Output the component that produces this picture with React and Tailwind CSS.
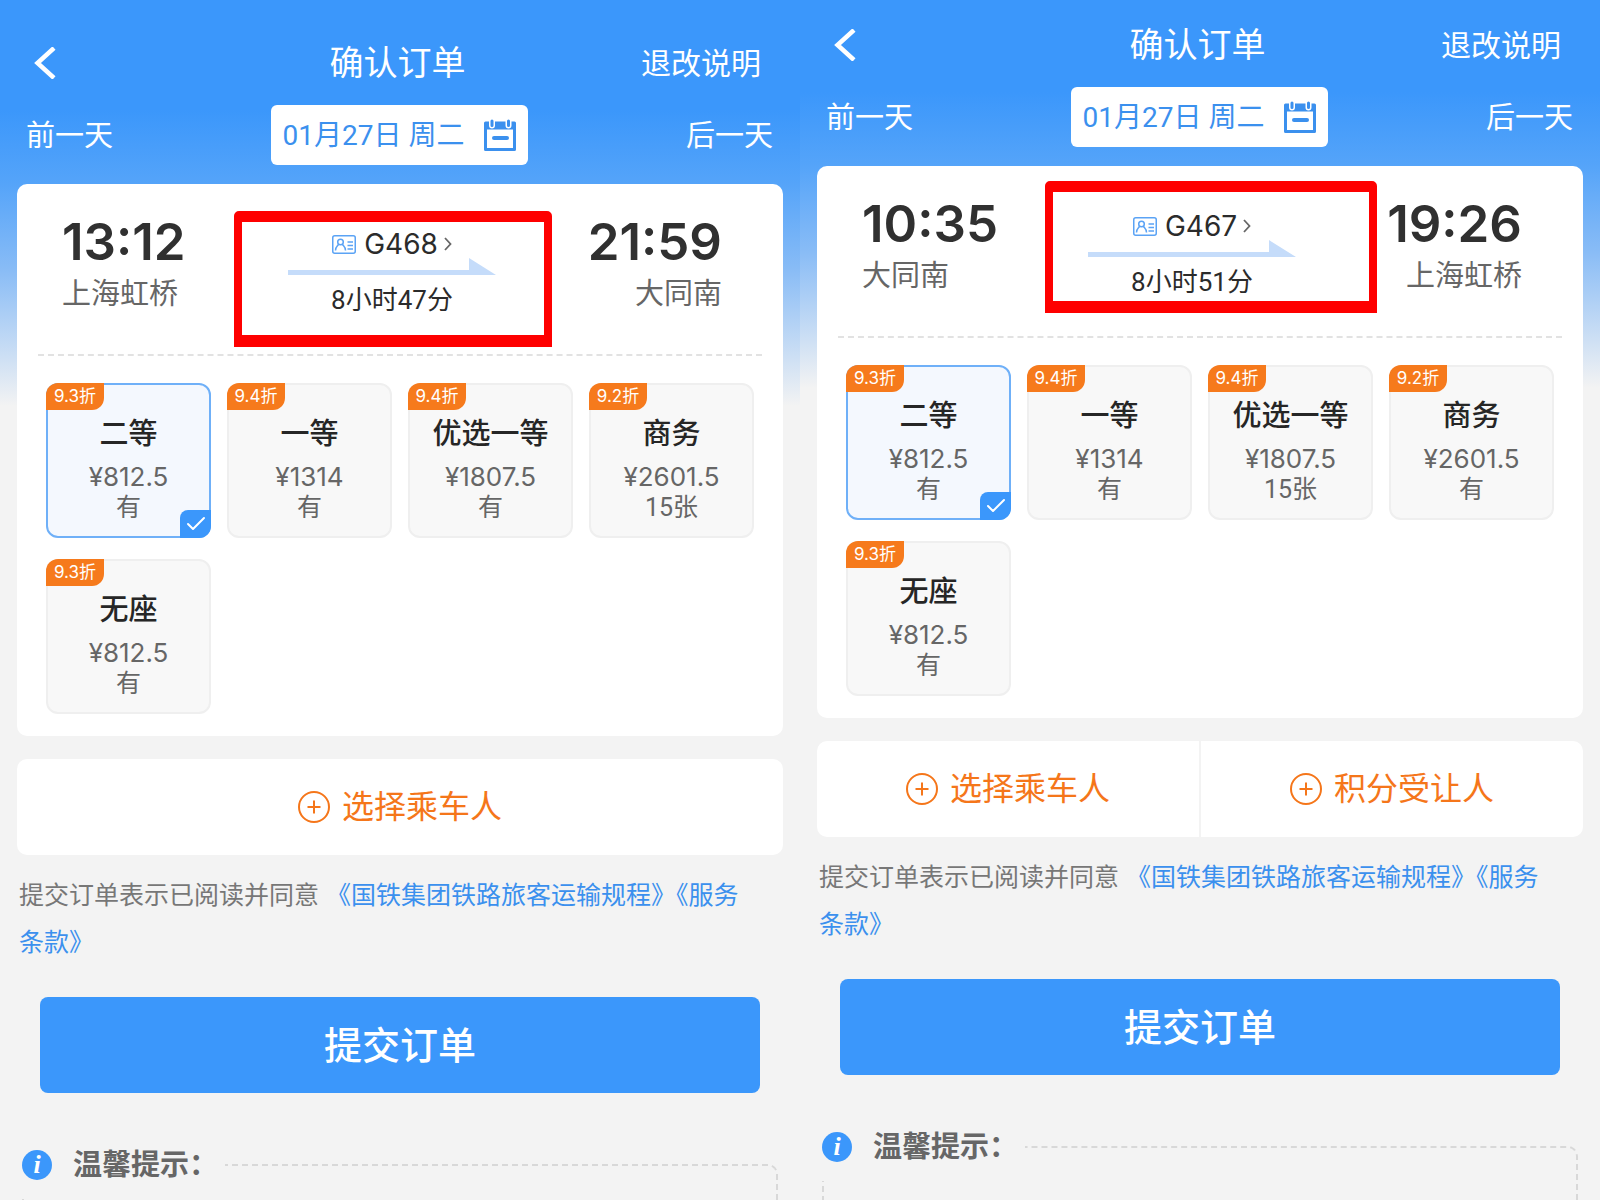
import React from "react";
import { Check } from "lucide-react";

const orders = [
  {
    id: "g468",
    train: "G468",
    duration: "8小时47分",
    from: { time: "13:12", station: "上海虹桥" },
    to: { time: "21:59", station: "大同南" },
    seats: [
      { name: "二等", price: "¥812.5", left: "有", discount: "9.3折" },
      { name: "一等", price: "¥1314", left: "有", discount: "9.4折" },
      { name: "优选一等", price: "¥1807.5", left: "有", discount: "9.4折" },
      { name: "商务", price: "¥2601.5", left: "15张", discount: "9.2折" },
      { name: "无座", price: "¥812.5", left: "有", discount: "9.3折" },
    ],
    actions: ["选择乘车人"],
    panel: "pt-[39px] bg-[linear-gradient(to_bottom,#3b97fb_110px,#55a4f9_184px,#89bcf6_270px,#f3f3f3_406px)]",
    mark: "-left-[54px] -top-[19px] w-[318px] h-[136px]",
  },
  {
    id: "g467",
    train: "G467",
    duration: "8小时51分",
    from: { time: "10:35", station: "大同南" },
    to: { time: "19:26", station: "上海虹桥" },
    seats: [
      { name: "二等", price: "¥812.5", left: "有", discount: "9.3折" },
      { name: "一等", price: "¥1314", left: "有", discount: "9.4折" },
      { name: "优选一等", price: "¥1807.5", left: "15张", discount: "9.4折" },
      { name: "商务", price: "¥2601.5", left: "有", discount: "9.2折" },
      { name: "无座", price: "¥812.5", left: "有", discount: "9.3折" },
    ],
    actions: ["选择乘车人", "积分受让人"],
    panel: "pt-[21px] bg-[linear-gradient(to_bottom,#3b97fb_92px,#55a4f9_166px,#89bcf6_252px,#f3f3f3_388px)]",
    mark: "-left-[43px] -top-[31px] w-[332px] h-[132px]",
  },
];

export default function App() {
  return (
    <div className="grid min-h-screen grid-cols-2 bg-[#f3f3f3] font-['Inter','Noto_Sans_CJK_SC',sans-serif]">
      {orders.map((order) => (
        <OrderPanel key={order.id} order={order} />
      ))}
    </div>
  );
}

function OrderPanel({ order }) {
  return (
    <main className={`flex min-w-0 flex-col ${order.panel}`}>
      <header className="grid h-12 grid-cols-[1fr_auto_1fr] items-center pl-[34px] pr-[39px] text-white">
        <button aria-label="返回" className="justify-self-start">
          <svg width="22" height="32" viewBox="0 0 22 32" fill="none" stroke="currentColor" strokeWidth="4.500">
            <path d="M20 1 L3.500 16 L20 31" />
          </svg>
        </button>
        <h1 className="text-[34px] leading-[48px]">确认订单</h1>
        <a href="#rules" className="justify-self-end text-[30px] leading-[48px]">退改说明</a>
      </header>

      <nav className="mt-[18px] flex h-[60px] items-center justify-between pl-[26px] pr-[27px] text-[29px] text-white">
        <button className="pt-[2px]">前一天</button>
        <button className="flex h-full items-center gap-[20px] rounded-md bg-white px-[12px] font-['Roboto','Noto_Sans_CJK_SC',sans-serif] text-[28px] text-[#3b90ee]">
          <span className="pt-[2px]">01月27日 周二</span>
          <CalendarIcon />
        </button>
        <button className="pt-[2px]">后一天</button>
      </nav>

      <section className="mx-[17px] mt-[19px] rounded-[10px] bg-white pb-[22px] pt-[29px]">
        <div className="grid grid-cols-[1fr_auto_1fr] pl-[45px] pr-[61px]">
          <Stop stop={order.from} />
          <div className="relative mt-[17px] flex w-[208px] flex-col items-center text-[#2b2b2b]">
            <a href="#train" className="flex h-[28px] items-center gap-[8px] text-[28px]">
              <IdCardIcon />
              {order.train}
              <svg width="8" height="14" viewBox="0 0 8 14" fill="none" stroke="#666" strokeWidth="1.800" className="-ml-[2px]">
                <path d="M1 1 L6.500 7 L1 13" />
              </svg>
            </a>
            <svg width="208" height="17" viewBox="0 0 208 17" fill="#c5dcfa">
              <path d="M0 12 H181 V0 L208 17 H0 Z" />
            </svg>
            <p className="font-['Roboto','Noto_Sans_CJK_SC',sans-serif] text-[26px] leading-[50px]">{order.duration}</p>
            <div className={`pointer-events-none absolute rounded-t-[5px] border-x-8 border-b-12 border-t-11 border-[#fe0000] ${order.mark}`} />
          </div>
          <Stop stop={order.to} right />
        </div>

        <div className="mx-[21px] mt-[29px] border-t-2 border-dashed border-[#e2e2e2]" />

        <div className="mt-[27px] grid grid-cols-4 gap-x-4 gap-y-[21px] px-[29px]">
          {order.seats.map((seat, i) => (
            <SeatOption key={seat.name} seat={seat} group={order.id} defaultChecked={i === 0} />
          ))}
        </div>
      </section>

      <section className="mx-[17px] mt-[23px] flex h-[96px] divide-x-2 divide-[#f3f3f3] rounded-[10px] bg-white">
        {order.actions.map((label) => (
          <button key={label} className="flex flex-1 items-center justify-center gap-[12px] text-[32px] text-[#f5761a]">
            <PlusIcon />
            {label}
          </button>
        ))}
      </section>

      <p className="mt-[17px] pl-[19px] pr-[40px] text-[25px] leading-[47px] text-[#777]">
        提交订单表示已阅读并同意{" "}
        <a href="#transport" className="text-[#3b90ee]">《国铁集团铁路旅客运输规程》</a>
        <a href="#terms" className="text-[#3b90ee]">《服务条款》</a>
      </p>

      <button className="mx-[40px] mt-[31px] h-[96px] rounded-lg bg-[#3b97fb] text-[38px] font-medium text-white">
        提交订单
      </button>

      <section className="mx-[22px] mt-[71px] flex-1 rounded-t-[10px] border-2 border-b-0 border-dashed border-[#d8d8d8]">
        <h2 className="-ml-[2px] -mt-[36px] flex h-[69px] w-[203px] items-center gap-[21px] bg-[#f3f3f3] text-[29px] font-bold text-[#666]">
          <span className="flex size-[30px] shrink-0 items-center justify-center rounded-full bg-[#3b97fb] font-['Liberation_Serif',serif] text-[26px] font-bold italic leading-[30px] text-white">
            i
          </span>
          <span className="whitespace-nowrap">温馨提示：</span>
        </h2>
      </section>
    </main>
  );
}

function Stop({ stop, right }) {
  return (
    <div className={right ? "text-right" : ""}>
      <p className="text-[51px] font-semibold leading-[58px] text-[#303030]">{stop.time}</p>
      <p className="text-[29px] leading-[46px] text-[#666]">{stop.station}</p>
    </div>
  );
}

function SeatOption({ seat, group, defaultChecked }) {
  return (
    <label className="relative flex h-[155px] cursor-pointer flex-col items-center rounded-xl border-2 border-[#efefef] bg-[#f8f8f8] pt-[27px] text-[26px] leading-[31px] text-[#666] has-[:checked]:border-[#6fb0f8] has-[:checked]:bg-[#f4f8fe]">
      <input type="radio" name={group} defaultChecked={defaultChecked} className="peer sr-only" />
      <span className="absolute -left-[2px] -top-[2px] flex h-[27px] w-[58px] items-center justify-center rounded-br-xl rounded-tl-xl bg-[#f67a1c] text-[17px] text-white">
        {seat.discount}
      </span>
      <span className="text-[29px] font-medium leading-[44px] text-[#262626]">{seat.name}</span>
      <span className="mt-[5px]">{seat.price}</span>
      <span className="font-['Roboto','Noto_Sans_CJK_SC',sans-serif] text-[25px]">{seat.left}</span>
      <span className="absolute -bottom-[2px] -right-[2px] hidden h-[28px] w-[31px] items-center justify-center rounded-br-xl rounded-tl-lg bg-[#3b97fb] text-white peer-checked:flex">
        <Check size={24} strokeWidth={2} />
      </span>
    </label>
  );
}

function CalendarIcon() {
  return (
    <svg width="32" height="33" viewBox="0 0 32 33" fill="none">
      <path d="M1.500 5 H30.500 V30.500 H1.500 Z" stroke="#3b90ee" strokeWidth="3" strokeLinejoin="round" />
      <path d="M0 4 Q0 2.500 1.500 2.500 H30.500 Q32 2.500 32 4 V10.500 H0 Z" fill="#3b90ee" />
      <path d="M8 0 V6.500 M24.500 0 V6.500" stroke="#fff" strokeWidth="6" strokeLinecap="round" />
      <path d="M8 2 V6.500 M24.500 2 V6.500" stroke="#3b90ee" strokeWidth="3" strokeLinecap="round" />
      <path d="M10 19 H23" stroke="#3b90ee" strokeWidth="4" strokeLinecap="round" />
    </svg>
  );
}

function IdCardIcon() {
  return (
    <svg width="24" height="19" viewBox="0 0 24 19" fill="none" stroke="#5ba3f5" strokeWidth="1.500">
      <rect x="0.750" y="0.750" width="22.500" height="17.500" rx="2" />
      <circle cx="8.500" cy="7" r="2.800" />
      <path d="M3.500 15.500 C3.500 12 5.500 11 6.500 9.500 M10.500 9.500 C11.500 11 13.500 12 13.500 15.500" />
      <path d="M15.500 7 H21 M15.500 10.500 H21 M15.500 14 H21" />
    </svg>
  );
}

function PlusIcon() {
  return (
    <svg width="32" height="32" viewBox="0 0 32 32" fill="none" stroke="currentColor" strokeWidth="2">
      <circle cx="16" cy="16" r="15" />
      <path d="M16 9.500 V22.500 M9.500 16 H22.500" />
    </svg>
  );
}
